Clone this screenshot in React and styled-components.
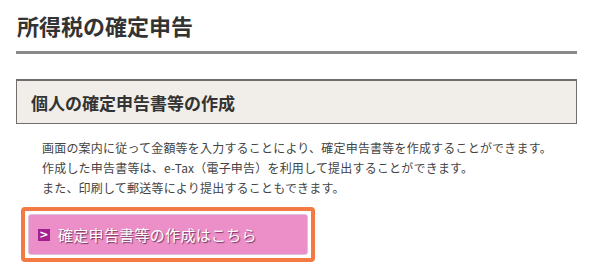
import React from 'react';
import styled, { createGlobalStyle } from 'styled-components';

const GlobalStyle = createGlobalStyle`
  body {
    margin: 0;
    background: #fff;
    font-family: "Noto Sans CJK JP", "Noto Sans", sans-serif;
    color: #333;
  }
`;

const App = () => {
  return (
    <>
      <GlobalStyle />
      <Page>
        <PageTitle>所得税の確定申告</PageTitle>
        <Section>
          <SectionHead>個人の確定申告書等の作成</SectionHead>
          <Body>
            <p>画面の案内に従って金額等を入力することにより、確定申告書等を作成することができます。</p>
            <p>作成した申告書等は、e-Tax（電子申告）を利用して提出することができます。</p>
            <p>また、印刷して郵送等により提出することもできます。</p>
          </Body>
          <Highlight>
            <LinkButton href="#">
              <Arrow>&gt;</Arrow>
              確定申告書等の作成はこちら
            </LinkButton>
          </Highlight>
        </Section>
      </Page>
    </>
  );
};

export default App;

const Page = styled.div`
  width: 561px;
  padding: 10px 0 0 16px;
`;

const PageTitle = styled.h1`
  margin: 0;
  padding: 0 0 11px 1px;
  font-size: 22px;
  line-height: 30px;
  font-weight: bold;
  color: #333;
  border-bottom: 3px solid #8a8a8a;
`;

const Section = styled.div`
  margin-top: 25px;
`;

const SectionHead = styled.h2`
  margin: 0;
  height: 42px;
  padding: 0 14px;
  display: flex;
  align-items: center;
  font-size: 17px;
  font-weight: bold;
  color: #333;
  background: #f1ede8;
  border: 1px solid #6e6e6e;
  border-top-width: 2px;
`;

const Body = styled.div`
  padding: 14px 0 0 26px;
  font-size: 12px;
  line-height: 20px;
  letter-spacing: 0.2px;
  color: #444;

  p {
    margin: 0;
  }
`;

const Highlight = styled.div`
  margin: 9px 0 0 5px;
  width: 280px;
  padding: 3px;
  border: 4px solid #f37a42;
  border-radius: 4px;
`;

const LinkButton = styled.a`
  display: flex;
  align-items: center;
  gap: 8px;
  height: 39px;
  padding: 0 9px;
  background: #ec8ec7;
  border: 1px solid #dcc3dd;
  border-radius: 3px;
  color: #fff;
  font-size: 15px;
  letter-spacing: 0.3px;
  text-decoration: none;
  text-shadow: 1px 1px 1px rgba(90, 30, 70, 0.8);
`;

const Arrow = styled.span`
  display: inline-flex;
  align-items: center;
  justify-content: center;
  width: 12px;
  height: 12px;
  background: #a4208e;
  color: #fff;
  font-size: 11px;
  font-weight: bold;
  line-height: 1;
  text-shadow: none;
  font-family: "DejaVu Sans", sans-serif;
`;
